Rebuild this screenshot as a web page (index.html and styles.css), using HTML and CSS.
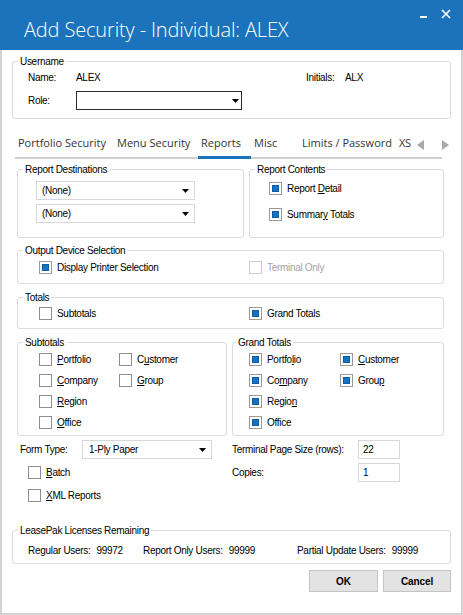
FILE: index.html
```html
<!DOCTYPE html>
<html>
<head>
<meta charset="utf-8">
<title>Add Security - Individual: ALEX</title>
<link rel="stylesheet" href="styles.css">
</head>
<body>
<div class="window">
  <div class="titlebar">
    <div class="title">Add Security - Individual: ALEX</div>
    <div class="controls">
      <svg class="ctl-min" width="7" height="2" viewBox="0 0 7 2"><rect x="0" y="0" width="7" height="2" fill="#fff"/></svg>
      <svg class="ctl-close" width="10" height="10" viewBox="0 0 10 10"><path d="M1 1 L9 9 M9 1 L1 9" stroke="#fff" stroke-width="1.7" fill="none"/></svg>
    </div>
  </div>

  <div class="body">
    <div class="group user">
      <div class="legend">Username</div>
      <div class="row name-row">
        <span class="lbl-user">Name:</span>
        <span class="name-val">ALEX</span>
        <span class="lbl-init">Initials:</span>
        <span>ALX</span>
      </div>
      <div class="row role-row">
        <span class="lbl-user">Role:</span>
        <div class="combo combo-dark role-combo">
          <span class="combo-text"></span>
          <svg class="caret" width="7" height="4" viewBox="0 0 7 4"><path d="M0 0H7L3.5 4Z" fill="#000"/></svg>
        </div>
      </div>
    </div>

    <div class="tabbar">
      <div class="tablist">
        <div class="tab tab-portfolio">Portfolio Security</div>
        <div class="tab tab-menu">Menu Security</div>
        <div class="tab tab-reports active">Reports</div>
        <div class="tab tab-misc">Misc</div>
        <div class="tab tab-limits">Limits / Password</div>
        <div class="tab tab-xs">XS</div>
        <svg class="tab-arrow arrow-left" width="7" height="10" viewBox="0 0 7 10"><path d="M7 0V10L0 5Z" fill="#a9a9a9"/></svg>
      </div>
      <svg class="tab-arrow arrow-right" width="7" height="10" viewBox="0 0 7 10"><path d="M0 0V10L7 5Z" fill="#a9a9a9"/></svg>
    </div>

    <div class="page">
      <div class="pair">
        <div class="group dest">
          <div class="legend">Report Destinations</div>
          <div class="combo combo-light dest-combo first">
            <span class="combo-text">(None)</span>
            <svg class="caret" width="7" height="4" viewBox="0 0 7 4"><path d="M0 0H7L3.5 4Z" fill="#000"/></svg>
          </div>
          <div class="combo combo-light dest-combo second">
            <span class="combo-text">(None)</span>
            <svg class="caret" width="7" height="4" viewBox="0 0 7 4"><path d="M0 0H7L3.5 4Z" fill="#000"/></svg>
          </div>
        </div>
        <div class="group contents">
          <div class="legend">Report Contents</div>
          <label class="cb first"><span class="box on"></span><span>Report <u>D</u>etail</span></label>
          <label class="cb second"><span class="box on"></span><span>Summar<u>y</u> Totals</span></label>
        </div>
      </div>

      <div class="group output">
        <div class="legend">Output Device Selection</div>
        <div class="two-col">
          <label class="cb col-a"><span class="box on"></span><span>Display Printer Selection</span></label>
          <label class="cb disabled"><span class="box"></span><span>Terminal Only</span></label>
        </div>
      </div>

      <div class="group totals">
        <div class="legend">Totals</div>
        <div class="two-col">
          <label class="cb col-a"><span class="box"></span><span>Subtotals</span></label>
          <label class="cb"><span class="box on"></span><span>Grand Totals</span></label>
        </div>
      </div>

      <div class="pair pair-lower">
        <div class="group subtotals">
          <div class="legend">Subtotals</div>
          <div class="cb-grid sub-grid">
            <label class="cb"><span class="box"></span><span><u>P</u>ortfolio</span></label>
            <label class="cb"><span class="box"></span><span>C<u>u</u>stomer</span></label>
            <label class="cb"><span class="box"></span><span><u>C</u>ompany</span></label>
            <label class="cb"><span class="box"></span><span><u>G</u>roup</span></label>
            <label class="cb"><span class="box"></span><span><u>R</u>egion</span></label>
            <span></span>
            <label class="cb"><span class="box"></span><span><u>O</u>ffice</span></label>
          </div>
        </div>
        <div class="group grand">
          <div class="legend legend-grand">Grand Totals</div>
          <div class="cb-grid grand-grid">
            <label class="cb"><span class="box on"></span><span>Portfo<u>l</u>io</span></label>
            <label class="cb"><span class="box on"></span><span><u>C</u>ustomer</span></label>
            <label class="cb"><span class="box on"></span><span>Co<u>m</u>pany</span></label>
            <label class="cb"><span class="box on"></span><span>Grou<u>p</u></span></label>
            <label class="cb"><span class="box on"></span><span>Regio<u>n</u></span></label>
            <span></span>
            <label class="cb"><span class="box on"></span><span>Office</span></label>
          </div>
        </div>
      </div>

      <div class="form-grid">
        <div class="field">
          <span class="lbl-form">Form Type:</span>
          <div class="combo combo-light form-combo">
            <span class="combo-text">1-Ply Paper</span>
            <svg class="caret" width="7" height="4" viewBox="0 0 7 4"><path d="M0 0H7L3.5 4Z" fill="#000"/></svg>
          </div>
        </div>
        <div class="field">
          <span class="lbl-right">Terminal Page Size (rows):</span>
          <div class="input">22</div>
        </div>
        <div class="field">
          <label class="cb indent"><span class="box"></span><span><u>B</u>atch</span></label>
        </div>
        <div class="field">
          <span class="lbl-right">Copies:</span>
          <div class="input">1</div>
        </div>
        <div class="field">
          <label class="cb indent"><span class="box"></span><span><u>X</u>ML Reports</span></label>
        </div>
        <div class="field"></div>
      </div>
    </div>

    <div class="group licenses">
      <div class="legend">LeasePak Licenses Remaining</div>
      <div class="lic-row">
        <span class="lic lic-1">Regular Users:<span class="num">99972</span></span>
        <span class="lic lic-2">Report Only Users:<span class="num">99999</span></span>
        <span class="lic">Partial Update Users:<span class="num">99999</span></span>
      </div>
    </div>

    <div class="buttons">
      <button class="btn">OK</button>
      <button class="btn">Cancel</button>
    </div>
  </div>
</div>
</body>
</html>
```

FILE: styles.css
```css
* { box-sizing: border-box; }
html, body { margin: 0; padding: 0; background: #fff; }
body {
  font-family: "Liberation Sans", Arial, sans-serif;
  font-size: 10px;
  letter-spacing: -0.3px;
  color: #000;
}

.window {
  width: 463px;
  height: 615px;
  display: flex;
  flex-direction: column;
  overflow: hidden;
}

/* ---------- title bar ---------- */
.titlebar {
  flex: none;
  height: 50px;
  background: #1b73bc;
  display: flex;
  justify-content: space-between;
}
.title {
  font-family: "Open Sans", sans-serif;
  font-weight: 300;
  font-size: 20px;
  line-height: 27px;
  letter-spacing: -0.15px;
  color: #fff;
  margin: 16px 0 0 24px;
  white-space: nowrap;
}
.controls { display: flex; align-items: flex-start; }
.ctl-min { margin: 16px 14px 0 0; display: block; }
.ctl-close { margin: 9px 12px 0 0; display: block; }

/* ---------- body ---------- */
.body {
  flex: 1;
  border: 2px solid #d3d3d3;
  border-top: 0;
  padding: 0 10px;
  display: flex;
  flex-direction: column;
}

.group {
  border: 1px solid #dcdcdc;
  border-radius: 3px;
}
.legend {
  display: block;
  width: max-content;
  margin: -7px 0 0 5px;
  padding: 0 2px;
  line-height: 13px;
  background: #fff;
  white-space: nowrap;
}
.legend-grand { margin-left: 3px; }

.row { display: flex; align-items: center; white-space: nowrap; }

/* username */
.user { margin-top: 11px; height: 58px; padding-left: 15px; }
.user .legend { margin-left: -10px; }
.name-row { height: 16px; margin-top: 1px; }
.lbl-user { width: 48px; flex: none; }
.name-val { width: 230px; flex: none; }
.lbl-init { width: 39px; flex: none; }
.role-row { margin-top: 6px; }

/* combos & inputs */
.combo {
  display: flex;
  align-items: center;
  justify-content: space-between;
  height: 19px;
  background: #fff;
  padding: 0 5px 0 5px;
}
.combo-dark { border: 1px solid #2b2b2b; }
.combo-light { border: 1px solid #d7d7d7; }
.caret { display: block; flex: none; }
.role-combo { width: 166px; padding-right: 2px; }

.input {
  width: 42px;
  height: 19px;
  border: 1px solid #d7d7d7;
  padding-left: 4px;
  line-height: 17px;
  background: #fff;
}

/* ---------- tabs ---------- */
.tabbar {
  display: flex;
  align-items: flex-start;
  margin: 16px 0 0 3px;
}
.tablist {
  width: 427px;
  height: 24px;
  display: flex;
  align-items: stretch;
  border-bottom: 2px solid #cfcfcf;
}
.tab {
  font-family: "Open Sans", sans-serif;
  font-size: 11px;
  letter-spacing: 0;
  line-height: 16px;
  color: #333;
  padding-left: 3px;
  white-space: nowrap;
  flex: none;
}
.tab.active {
  border-bottom: 3px solid #1b73bc;
  margin-bottom: -2px;
}
.tab-portfolio { width: 99px; }
.tab-menu { width: 84px; }
.tab-reports { width: 53px; }
.tab-misc { width: 48px; }
.tab-limits { width: 97px; }
.tab-xs { width: 16px; letter-spacing: -0.4px; }
.tab-arrow { display: block; flex: none; margin-top: 5px; }
.arrow-left { margin-left: 5px; }

/* ---------- tab page ---------- */
.page { margin-left: 5px; width: 427px; }

.pair { display: flex; gap: 5px; margin-top: 10px; }
.dest { width: 227px; height: 69px; padding-left: 18px; }
.dest .legend { margin-left: -13px; }
.dest-combo { width: 159px; }
.dest-combo.first { margin-top: 5px; }
.dest-combo.second { margin-top: 4px; }

.contents { width: 195px; height: 69px; padding-left: 19px; }
.contents .legend { margin-left: -14px; }
.contents .cb.first { margin-top: 4px; }
.contents .cb.second { margin-top: 10px; }

.cb {
  display: flex;
  align-items: center;
  height: 16px;
  gap: 5px;
  white-space: nowrap;
}
.box {
  flex: none;
  width: 13px;
  height: 13px;
  border: 1px solid #8e8e8e;
  background: #fff;
  padding: 2px;
}
.box.on { border-color: #9a9a9a; }
.box.on::after {
  content: "";
  display: block;
  width: 7px;
  height: 7px;
  background: #1672c2;
  box-shadow: inset 0 0 0 1px #0d5da6;
}
.cb.disabled { color: #a3a3a3; }
.cb.disabled .box { border-color: #cdcdcd; }
u { text-underline-offset: 1px; }

.output { margin-top: 12px; height: 34px; padding-left: 21px; }
.output .two-col { margin-top: 2px; }
.totals { margin-top: 13px; height: 32px; padding-left: 21px; }
.totals .two-col { margin-top: 1px; }
.output .legend, .totals .legend { margin-left: -16px; }
.two-col { display: flex; }
.col-a { width: 210px; flex: none; }

.pair-lower { margin-top: 13px; }
.subtotals { width: 210px; height: 94px; padding-left: 21px; }
.subtotals .legend { margin-left: -16px; }
.grand { width: 212px; height: 94px; padding-left: 16px; }
.grand .legend { margin-left: -13px; }
.cb-grid {
  display: grid;
  grid-auto-rows: 16px;
  row-gap: 5px;
  margin-top: 2px;
}
.sub-grid { grid-template-columns: 80px auto; }
.grand-grid { grid-template-columns: 91px auto; }

/* form area */
.form-grid {
  display: grid;
  grid-template-columns: 215px 212px;
  grid-auto-rows: 19px;
  row-gap: 4px;
  margin-top: 4px;
}
.field { display: flex; align-items: center; white-space: nowrap; }
.lbl-form { width: 65px; padding-left: 3px; flex: none; }
.form-combo { width: 130px; padding-left: 6px; }
.lbl-right { width: 126px; flex: none; }
.cb.indent { margin-left: 11px; }

/* licenses */
.licenses { margin-top: 25px; height: 34px; padding-left: 15px; flex: none; }
.licenses .legend { margin-left: -10px; }
.lic-row { display: flex; align-items: center; height: 16px; margin-top: 5px; white-space: nowrap; }
.lic { flex: none; }
.lic-1 { width: 115px; }
.lic-2 { width: 154px; }
.num { margin-left: 6px; }

/* buttons */
.buttons {
  display: flex;
  justify-content: flex-end;
  gap: 5px;
  margin-top: 6px;
}
.btn {
  width: 68px;
  height: 22px;
  background: #e3e3e3;
  border: 1px solid #c4c4c4;
  border-radius: 0;
  font-family: "Liberation Sans", Arial, sans-serif;
  font-weight: bold;
  font-size: 10px;
  letter-spacing: -0.1px;
  color: #000;
  padding: 0;
}
.btn:first-child { width: 69px; }
```
